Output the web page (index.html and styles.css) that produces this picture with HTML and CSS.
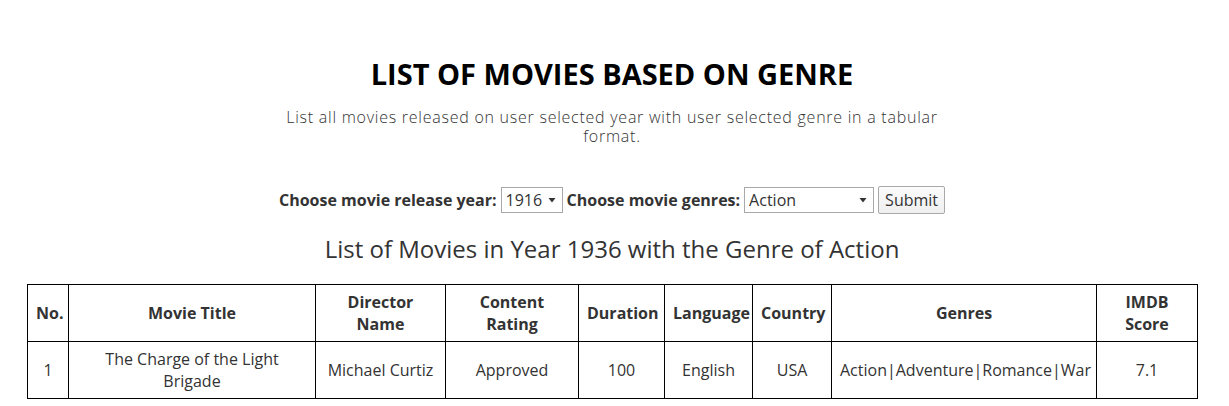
FILE: index.html
```html
<!DOCTYPE html>
<html lang="en">
<head>
<meta charset="utf-8">
<title>List of Movies Based on Genre</title>
<link rel="stylesheet" href="styles.css">
</head>
<body>
<div class="page">
  <header class="intro">
    <h1 class="title">LIST OF MOVIES BASED ON GENRE</h1>
    <p class="lead">List all movies released on user selected year with user selected genre in a tabular format.</p>
  </header>
  <form class="filter">
    <label class="label" for="year">Choose movie release year:</label>
    <select id="year" class="select select-year"><option>1916</option></select>
    <label class="label" for="genre">Choose movie genres:</label>
    <select id="genre" class="select select-genre"><option>Action</option></select>
    <button type="button" class="submit">Submit</button>
  </form>
  <h2 class="result-title">List of Movies in Year 1936 with the Genre of Action</h2>
  <table class="movies">
    <colgroup>
      <col class="c-no"><col class="c-title"><col class="c-dir"><col class="c-rating"><col class="c-dur"><col class="c-lang"><col class="c-country"><col class="c-genres"><col class="c-score">
    </colgroup>
    <thead>
      <tr>
        <th>No.</th><th>Movie Title</th><th>Director Name</th><th>Content Rating</th><th>Duration</th><th>Language</th><th>Country</th><th>Genres</th><th>IMDB Score</th>
      </tr>
    </thead>
    <tbody>
      <tr>
        <td>1</td><td>The Charge of the Light Brigade</td><td>Michael Curtiz</td><td>Approved</td><td>100</td><td>English</td><td>USA</td><td>Action|Adventure|Romance|War</td><td>7.1</td>
      </tr>
    </tbody>
  </table>
</div>
</body>
</html>
```

FILE: styles.css
```css
html, body {
  margin: 0;
  padding: 0;
  background: #fff;
}
body {
  font-family: "Open Sans", "Liberation Sans", sans-serif;
  font-size: 16px;
  color: #333;
}
.page {
  width: 1170px;
  margin-left: 27px;
  padding-top: 57px;
}
.intro {
  display: flex;
  flex-direction: column;
  align-items: center;
}
.title {
  margin: 0;
  font-size: 29px;
  font-weight: 700;
  line-height: 34px;
  color: #000;
}
.lead {
  margin: 17px 0 0;
  width: 670px;
  text-align: center;
  font-weight: 300;
  font-size: 16px;
  letter-spacing: 0.75px;
  line-height: 19px;
  color: #333;
}
.filter {
  margin-top: 40px;
  display: flex;
  justify-content: center;
  align-items: center;
  gap: 4px;
  height: 28px;
}
.label {
  font-weight: 700;
  color: #333;
}
.select {
  appearance: none;
  -webkit-appearance: none;
  font-family: "Open Sans", "Liberation Sans", sans-serif;
  font-size: 16px;
  color: #333;
  height: 26px;
  border: 1px solid #a9a9a9;
  border-radius: 0;
  background-color: #fff;
  background-image: url("data:image/svg+xml;utf8,<svg xmlns='http://www.w3.org/2000/svg' width='8' height='6'><path d='M0.5 1h7L4 5.5z' fill='%23333'/></svg>");
  background-repeat: no-repeat;
  background-position: right 6px center;
  padding: 0 18px 0 4px;
  margin: 0;
}
.select-year { width: 62px; }
.select-genre { width: 130px; }
.submit {
  font-family: "Open Sans", "Liberation Sans", sans-serif;
  font-size: 16px;
  color: #333;
  height: 28px;
  padding: 0 6px;
  border: 1px solid #a9a9a9;
  border-radius: 2px;
  background: linear-gradient(#fbfbfb, #efefef);
}
.result-title {
  margin: 18px 0 0;
  text-align: center;
  font-size: 24px;
  font-weight: 400;
  line-height: 34px;
  color: #333;
}
.movies {
  margin-top: 18px;
  width: 1170px;
  table-layout: fixed;
  border-collapse: collapse;
  border: 1px solid #000;
}
.movies th, .movies td {
  border: 1px solid #000;
  text-align: center;
  vertical-align: middle;
  padding: 5px 8px;
  line-height: 22px;
}
.movies th {
  font-weight: 700;
  color: #333;
  height: 46px;
}
.movies td {
  height: 46px;
}
.c-no { width: 41px; }
.c-title { width: 247px; }
.c-dir { width: 130px; }
.c-rating { width: 133px; }
.c-dur { width: 86px; }
.c-lang { width: 88px; }
.c-country { width: 79px; }
.c-genres { width: 265px; }
.c-score { width: 101px; }
```
